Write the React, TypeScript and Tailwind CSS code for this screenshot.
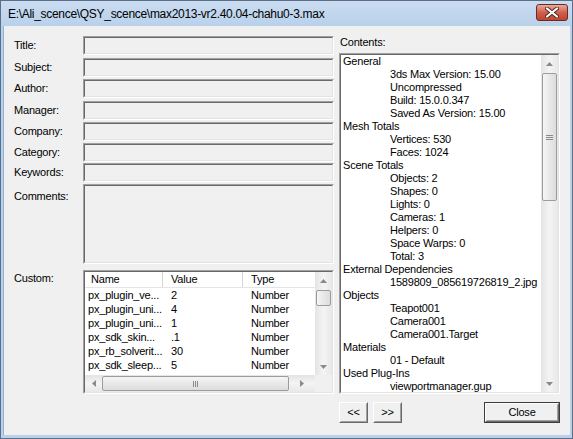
import React from "react";

// field rows on the left: label + sunken read-only edit box
const fields = [
  { label: "Title:", row: "h-[22px]" },
  { label: "Subject:", row: "h-[21px]" },
  { label: "Author:", row: "h-[22px]" },
  { label: "Manager:", row: "h-[21px]" },
  { label: "Company:", row: "h-[21px]" },
  { label: "Category:", row: "h-[20px]" },
  { label: "Keywords:", row: "h-[21px]" },
];

const contents: [string, boolean][] = [
  ["General", false],
  ["3ds Max Version: 15.00", true],
  ["Uncompressed", true],
  ["Build: 15.0.0.347", true],
  ["Saved As Version: 15.00", true],
  ["Mesh Totals", false],
  ["Vertices: 530", true],
  ["Faces: 1024", true],
  ["Scene Totals", false],
  ["Objects: 2", true],
  ["Shapes: 0", true],
  ["Lights: 0", true],
  ["Cameras: 1", true],
  ["Helpers: 0", true],
  ["Space Warps: 0", true],
  ["Total: 3", true],
  ["External Dependencies", false],
  ["1589809_085619726819_2.jpg", true],
  ["Objects", false],
  ["Teapot001", true],
  ["Camera001", true],
  ["Camera001.Target", true],
  ["Materials", false],
  ["01 - Default", true],
  ["Used Plug-Ins", false],
  ["viewportmanager.gup", true],
];

const custom = [
  ["px_plugin_ve...", "2", "Number"],
  ["px_plugin_uni...", "4", "Number"],
  ["px_plugin_uni...", "1", "Number"],
  ["px_sdk_skin...", ".1", "Number"],
  ["px_rb_solverit...", "30", "Number"],
  ["px_sdk_sleep...", "5", "Number"],
];

const Sunken = ({ className = "", inner = "", children }: any) => (
  <div className={`border border-t-[#a0a0a0] border-l-[#a0a0a0] border-b-white border-r-white ${className}`}>
    <div className={`h-full w-full border border-t-[#696969] border-l-[#696969] border-b-[#e3e3e3] border-r-[#e3e3e3] ${inner}`}>
      {children}
    </div>
  </div>
);

const Arrow = ({ dir }: { dir: "up" | "down" | "left" | "right" }) => {
  const pts = {
    up: "0,4 7,4 3.5,0",
    down: "0,0 7,0 3.5,4",
    left: "4,0 4,7 0,3.5",
    right: "0,0 0,7 4,3.5",
  }[dir];
  const vert = dir === "up" || dir === "down";
  return (
    <svg width={vert ? 7 : 4} height={vert ? 4 : 7} viewBox={vert ? "0 0 7 4" : "0 0 4 7"}>
      <polygon points={pts} fill="#8a8a8a" />
    </svg>
  );
};

const VScroll = ({ thumbTop, thumbH, grip = false }: any) => (
  <div className="flex h-full w-[17px] flex-col bg-gradient-to-r from-[#e4e4e4] via-[#f4f4f4] to-[#e8e8e8]">
    <div className="flex h-[17px] items-center justify-center">
      <Arrow dir="up" />
    </div>
    <div className="relative flex-1">
      <div
        className="absolute left-[1px] right-[1px] flex items-center justify-center rounded-[2px] border border-[#9c9c9c] bg-gradient-to-r from-[#f5f5f5] to-[#dcdcdc]"
        style={{ top: thumbTop, height: thumbH }}
      >
        {grip && (
          <div className="flex w-[7px] flex-col gap-[1px]">
            <div className="h-[1px] bg-[#8a8a8a]" />
            <div className="h-[1px] bg-[#8a8a8a]" />
            <div className="h-[1px] bg-[#8a8a8a]" />
          </div>
        )}
      </div>
    </div>
    <div className="flex h-[17px] items-center justify-center">
      <Arrow dir="down" />
    </div>
  </div>
);

const Button = ({ label, w, isDefault = false }: any) => (
  <div className={`h-[21px] ${w} ${isDefault ? "border border-[#3c3c3c]" : ""}`}>
    <div className="h-full w-full border border-t-white border-l-white border-b-[#696969] border-r-[#696969]">
      <div className="flex h-full w-full items-center justify-center border border-t-[#f0f0f0] border-l-[#f0f0f0] border-b-[#a0a0a0] border-r-[#a0a0a0] bg-[#f0f0f0]">
        {label}
      </div>
    </div>
  </div>
);

export default function App() {
  return (
    <div className="flex h-[439px] w-[573px] flex-col border border-[#5b6f86] bg-[#b9d1ea] font-['Liberation_Sans',Arial,sans-serif] text-[11px] leading-none tracking-[-0.2px] text-black">
      {/* Title bar */}
      <div className="flex h-[25px] shrink-0 items-center justify-between bg-gradient-to-b from-[#cadcf1] to-[#b9d1ea] pl-[7px] pr-[4px]">
        <span className="text-[12px] tracking-[-0.3px]">E:\Ali_scence\QSY_scence\max2013-vr2.40.04-chahu0-3.max</span>
        <div className="mb-[2px] flex h-[17px] w-[32px] items-center justify-center rounded-[3px] border border-[#6b2a22] bg-gradient-to-b from-[#e9a99c] via-[#d0604b] to-[#c0442e]">
          <svg width="14" height="11" viewBox="0 0 14 11">
            <path d="M2 1.5 L12 9.5 M12 1.5 L2 9.5" stroke="#4a2a26" strokeWidth="4" strokeLinecap="round" />
            <path d="M2 1.5 L12 9.5 M12 1.5 L2 9.5" stroke="#ffffff" strokeWidth="2.2" strokeLinecap="round" />
          </svg>
        </div>
      </div>

      {/* Client area */}
      <div className="mx-[2px] mb-[3px] flex flex-1 border-l border-[#8fb3d8] bg-[#f0f0f0]">
        {/* Left column */}
        <div className="flex w-[335px] flex-col pl-[10px] pt-[10px]">
          {fields.map((f) => (
            <div key={f.label} className={`flex ${f.row}`}>
              <div className="flex h-[19px] w-[69px] items-center">{f.label}</div>
              <Sunken className="h-[19px] w-[251px]" inner="bg-[#f0f0f0]" />
            </div>
          ))}
          <div className="flex h-[86px]">
            <div className="w-[69px] pt-[7px]">Comments:</div>
            <Sunken className="h-[80px] w-[251px]" inner="bg-[#f0f0f0]" />
          </div>
          <div className="flex">
            <div className="w-[69px] pt-[3px]">Custom:</div>
            <Sunken className="h-[124px] w-[251px]" inner="bg-white flex flex-col">
              <div className="flex h-[104px]">
                <div className="flex w-[230px] flex-col overflow-hidden">
                  <div className="flex h-[16px] shrink-0 items-center border-b border-[#e5e5e5] bg-white">
                    <div className="flex h-full w-[78px] items-center border-r border-[#d5d5d5] pl-[6px]">Name</div>
                    <div className="flex h-full w-[80px] items-center border-r border-[#d5d5d5] pl-[8px]">Value</div>
                    <div className="flex h-full flex-1 items-center pl-[8px]">Type</div>
                  </div>
                  {custom.map((r, i) => (
                    <div key={i} className="flex h-[14px] shrink-0 items-center">
                      <div className="w-[78px] pl-[3px]">{r[0]}</div>
                      <div className="w-[80px] pl-[8px]">{r[1]}</div>
                      <div className="flex-1 pl-[8px]">{r[2]}</div>
                    </div>
                  ))}
                </div>
                <VScroll thumbTop={1} thumbH={16} />
              </div>
              <div className="flex h-[17px]">
                <div className="flex w-[230px] items-center bg-gradient-to-b from-[#e4e4e4] via-[#f4f4f4] to-[#e8e8e8]">
                  <div className="flex w-[17px] justify-center">
                    <Arrow dir="left" />
                  </div>
                  <div className="flex h-[15px] w-[187px] items-center justify-center rounded-[2px] border border-[#9c9c9c] bg-gradient-to-b from-[#f5f5f5] to-[#dcdcdc]">
                    <div className="flex h-[6px] gap-[1px]">
                      <div className="w-[1px] bg-[#8a8a8a]" />
                      <div className="w-[1px] bg-[#8a8a8a]" />
                      <div className="w-[1px] bg-[#8a8a8a]" />
                    </div>
                  </div>
                  <div className="flex flex-1 justify-center">
                    <Arrow dir="right" />
                  </div>
                </div>
                <div className="flex-1 bg-[#f0f0f0]" />
              </div>
            </Sunken>
          </div>
        </div>

        {/* Right column */}
        <div className="flex w-[221px] flex-col pt-[11px]">
          <div className="h-[16px] pl-[1px]">Contents:</div>
          <Sunken className="h-[341px] w-[221px]" inner="bg-white flex">
            <div className="flex-1 overflow-hidden pl-[2px]">
              {contents.map(([t, indent], i) => (
                <div key={i} className={`flex h-[13px] items-center whitespace-nowrap ${indent ? "pl-[47px]" : ""}`}>
                  {t}
                </div>
              ))}
            </div>
            <VScroll thumbTop={1} thumbH={128} grip />
          </Sunken>
          <div className="mt-[8px] flex">
            <Button label="<<" w="w-[29px]" />
            <div className="w-[5px]" />
            <Button label=">>" w="w-[29px]" />
            <div className="flex-1" />
            <Button label="Close" w="w-[76px]" isDefault />
          </div>
        </div>
      </div>
    </div>
  );
}
